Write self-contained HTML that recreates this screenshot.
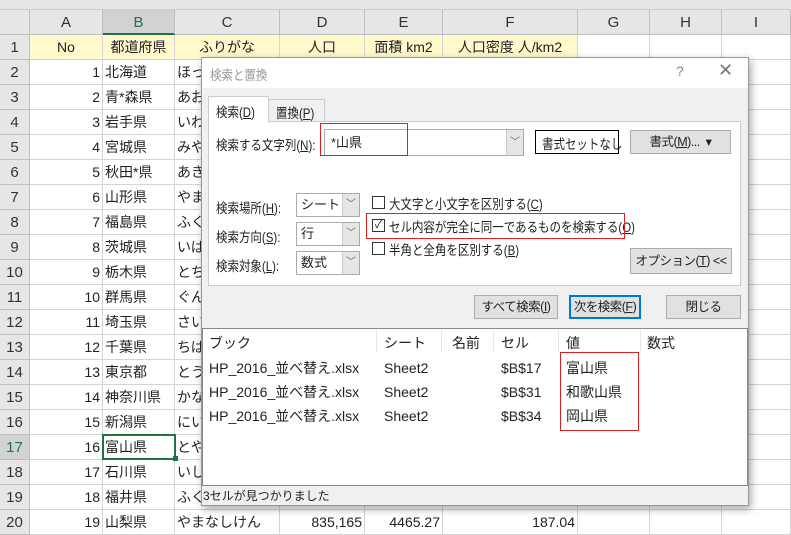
<!DOCTYPE html>
<html><head><meta charset="utf-8"><style>
*{box-sizing:border-box;margin:0;padding:0}
body{width:791px;height:532px;overflow:hidden;background:#fff;font-family:"Liberation Sans","Noto Sans CJK JP",sans-serif;font-size:14px;color:#222;position:relative}
.a{position:absolute;white-space:nowrap}
.c{position:absolute;border-right:1px solid #d4d4d4;border-bottom:1px solid #d4d4d4;height:25px;line-height:24px;overflow:hidden;padding:0 2px}
.hd{position:absolute;background:#e6e6e6;border-right:1px solid #bfbfbf;border-bottom:1px solid #bfbfbf;text-align:center;color:#333;font-size:15px}
.btn{position:absolute;background:#e1e1e1;border:1px solid #adadad;text-align:center;font-size:12.5px;letter-spacing:-0.5px}
.cb{position:absolute;width:13px;height:13px;border:1px solid #333;background:#fff}
.sel{position:absolute;background:#fff;border:1px solid #aaa;font-size:13px;padding-left:4px}
.sel i{position:absolute;right:0;top:0;bottom:0;width:17px;background:#e6e6e6;border-left:1px solid #ccc;font-style:normal;font-size:10px;text-align:center;color:#666}
.lbl{position:absolute;font-size:13.5px;transform:scaleX(0.85);transform-origin:0 0;white-space:nowrap}
</style></head><body>
<div class="a" style="left:0;top:0;width:791px;height:10px;background:#e6e6e6;border-bottom:1px solid #ccc"></div>
<div class="hd" style="left:0;top:10px;width:30px;height:25px"></div>
<div class="hd" style="left:30px;top:10px;width:73px;height:25px;line-height:25px">A</div>
<div class="hd" style="left:103px;top:10px;width:72px;height:25px;line-height:25px;background:#d2d2d2;border-bottom:2px solid #217346;color:#217346">B</div>
<div class="hd" style="left:175px;top:10px;width:105px;height:25px;line-height:25px">C</div>
<div class="hd" style="left:280px;top:10px;width:85px;height:25px;line-height:25px">D</div>
<div class="hd" style="left:365px;top:10px;width:78px;height:25px;line-height:25px">E</div>
<div class="hd" style="left:443px;top:10px;width:135px;height:25px;line-height:25px">F</div>
<div class="hd" style="left:578px;top:10px;width:72px;height:25px;line-height:25px">G</div>
<div class="hd" style="left:650px;top:10px;width:72px;height:25px;line-height:25px">H</div>
<div class="hd" style="left:722px;top:10px;width:69px;height:25px;line-height:25px">I</div>
<div id="rows"></div>
<script>
var d=[["No","都道府県","ふりがな","人口","面積 km2","人口密度 人/km2"],[1,"北海道","ほっ"],[2,"青*森県","あお"],[3,"岩手県","いわ"],[4,"宮城県","みや"],[5,"秋田*県","あき"],[6,"山形県","やま"],[7,"福島県","ふく"],[8,"茨城県","いば"],[9,"栃木県","とち"],[10,"群馬県","ぐん"],[11,"埼玉県","さい"],[12,"千葉県","ちば"],[13,"東京都","とう"],[14,"神奈川県","かな"],[15,"新潟県","にい"],[16,"富山県","とや"],[17,"石川県","いし"],[18,"福井県","ふく"],[19,"山梨県","やまなしけん","835,165","4465.27","187.04"]];
var xs=[30,103,175,280,365,443,578,650,722,791],h="";
for(var r=0;r<20;r++){var y=35+r*25;
h+='<div class="hd" style="left:0;top:'+y+'px;width:30px;height:25px;line-height:25px'+(r==16?';background:#d2d2d2;color:#217346':'')+'">'+(r+1)+'</div>';
for(var c=0;c<9;c++){var v=d[r][c]!==undefined?d[r][c]:"";var al=(r==0)?'center':(c==0||c>=3?'right':'left');
h+='<div class="c" style="left:'+xs[c]+'px;top:'+y+'px;width:'+(xs[c+1]-xs[c])+'px;text-align:'+al+(r==0&&c<6?';background:#fff9cc':'')+'">'+v+'</div>';}}
h+='<div class="a" style="left:102px;top:434px;width:74px;height:26px;border:2px solid #217346"></div><div class="a" style="left:173px;top:456px;width:5px;height:5px;background:#217346"></div>';
document.getElementById('rows').innerHTML=h;
</script>
<!-- dialog -->
<div class="a" style="left:201px;top:57px;width:548px;height:449px;background:#f0f0f0;border:1px solid #999;box-shadow:2px 3px 8px rgba(0,0,0,.35)">
 <div class="a" style="left:0;top:0;width:546px;height:30px;background:#fff"></div>
 <div class="lbl" style="left:8px;top:6px;color:#999">検索と置換</div>
 <div class="a" style="left:474px;top:5px;font-size:14px;color:#888">?</div>
 <div class="a" style="left:516px;top:2px;font-size:18px;color:#777">✕</div>
 <div class="a" style="left:6px;top:63px;width:533px;height:165px;background:#fff;border:1px solid #ccc"></div>
 <div class="a" style="left:66px;top:41px;width:57px;height:23px;background:#f0f0f0;border:1px solid #ccc"></div>
 <div class="lbl" style="left:74px;top:44px">置換(<u>P</u>)</div>
 <div class="a" style="left:6px;top:38px;width:61px;height:27px;background:#fff;border:1px solid #ccc;border-bottom:none"></div>
 <div class="lbl" style="left:14px;top:43px">検索(<u>D</u>)</div>
 <div class="lbl" style="left:14px;top:76px">検索する文字列(<u>N</u>):</div>
 <div class="sel" style="left:122px;top:71px;width:200px;height:27px;line-height:25px;padding-left:6px">*山県<i style="line-height:25px">﹀</i></div>
 <div class="a" style="left:118px;top:65px;width:88px;height:33px;border:1px solid #e02020"></div>
 <div class="a" style="left:333px;top:72px;width:84px;height:24px;border:1px solid #000;background:#fff"></div>
 <div class="lbl" style="left:340px;top:75px">書式セットなし</div>
 <div class="btn" style="left:428px;top:72px;width:101px;height:24px;line-height:22px">書式(<u>M</u>)... &nbsp;▾</div>
 <div class="lbl" style="left:14px;top:139px">検索場所(<u>H</u>):</div>
 <div class="lbl" style="left:14px;top:168px">検索方向(<u>S</u>):</div>
 <div class="lbl" style="left:14px;top:197px">検索対象(<u>L</u>):</div>
 <div class="sel" style="left:94px;top:135px;width:64px;height:24px;line-height:22px">シート<i style="line-height:22px">﹀</i></div>
 <div class="sel" style="left:94px;top:164px;width:64px;height:24px;line-height:22px">行<i style="line-height:22px">﹀</i></div>
 <div class="sel" style="left:94px;top:193px;width:64px;height:24px;line-height:22px">数式<i style="line-height:22px">﹀</i></div>
 <div class="cb" style="left:170px;top:138px"></div><div class="lbl" style="left:187px;top:135px">大文字と小文字を区別する(<u>C</u>)</div>
 <div class="cb" style="left:170px;top:161px;font-size:11px;line-height:11px;text-align:center">✓</div><div class="lbl" style="left:187px;top:158px">セル内容が完全に同一であるものを検索する(<u>O</u>)</div>
 <div class="a" style="left:164px;top:155px;width:259px;height:26px;border:1px solid #e02020"></div>
 <div class="cb" style="left:170px;top:184px"></div><div class="lbl" style="left:187px;top:181px">半角と全角を区別する(<u>B</u>)</div>
 <div class="btn" style="left:428px;top:190px;width:102px;height:26px;line-height:24px">オプション(<u>T</u>) &lt;&lt;</div>
 <div class="btn" style="left:272px;top:237px;width:84px;height:24px;line-height:22px">すべて検索(<u>I</u>)</div>
 <div class="btn" style="left:367px;top:237px;width:72px;height:24px;line-height:20px;border:2px solid #0078d7">次を検索(<u>F</u>)</div>
 <div class="btn" style="left:464px;top:237px;width:75px;height:24px;line-height:22px">閉じる</div>
 <div class="a" style="left:0;top:270px;width:546px;height:158px;background:#fff;border:1px solid #888"></div>
</div>
<div class="a" style="left:209px;top:333px;font-size:14px">ブック</div>
<div class="a" style="left:384px;top:333px">シート</div>
<div class="a" style="left:452px;top:333px">名前</div>
<div class="a" style="left:501px;top:333px">セル</div>
<div class="a" style="left:566px;top:333px">値</div>
<div class="a" style="left:647px;top:333px">数式</div>
<div class="a" style="left:376px;top:330px;width:1px;height:22px;background:#e5e5e5"></div>
<div class="a" style="left:441px;top:330px;width:1px;height:22px;background:#e5e5e5"></div>
<div class="a" style="left:493px;top:330px;width:1px;height:22px;background:#e5e5e5"></div>
<div class="a" style="left:558px;top:330px;width:1px;height:22px;background:#e5e5e5"></div>
<div class="a" style="left:640px;top:330px;width:1px;height:22px;background:#e5e5e5"></div>
<div class="a" style="left:209px;top:356px;line-height:24px">HP_2016_並べ替え.xlsx<br>HP_2016_並べ替え.xlsx<br>HP_2016_並べ替え.xlsx</div>
<div class="a" style="left:384px;top:356px;line-height:24px">Sheet2<br>Sheet2<br>Sheet2</div>
<div class="a" style="left:501px;top:356px;line-height:24px">$B$17<br>$B$31<br>$B$34</div>
<div class="a" style="left:566px;top:356px;line-height:24px">富山県<br>和歌山県<br>岡山県</div>
<div class="a" style="left:560px;top:352px;width:79px;height:79px;border:1px solid #e02020"></div>
<div class="a" style="left:203px;top:487px;font-size:12px">3セルが見つかりました</div>
</body></html>
